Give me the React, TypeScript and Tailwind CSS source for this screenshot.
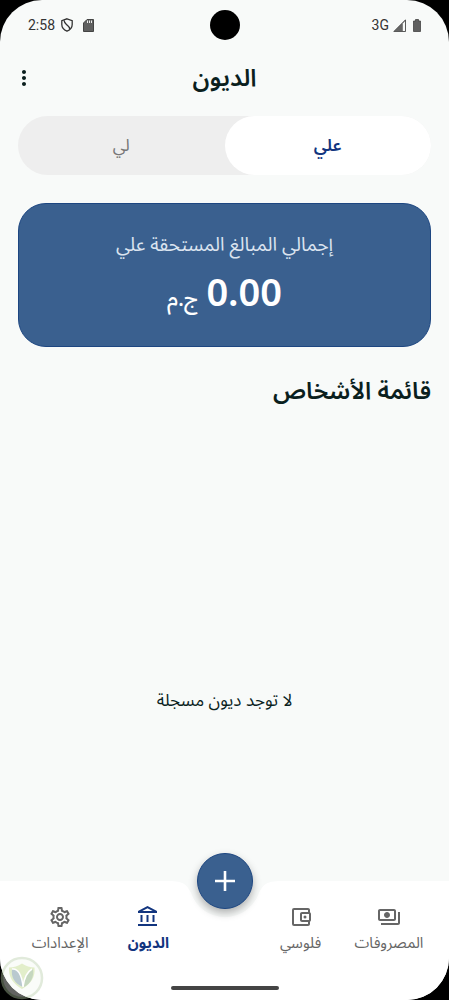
import { useState, type ReactNode } from "react";
import clsx from "clsx";
import {
  MdMoreVert,
  MdOutlineAccountBalance,
  MdOutlineAccountBalanceWallet,
  MdOutlinePayments,
  MdOutlineSettings,
} from "react-icons/md";

type Tab = "owed" | "lent";

function StatusBar() {
  return (
    <div dir="ltr" className="relative flex h-[50px] items-center justify-between pr-7 pl-7 text-[#333]">
      <div className="flex items-center gap-1.5 font-[Roboto,sans-serif] text-sm">
        <span>2:58</span>
        <svg viewBox="0 0 12 14" className="h-3.5 w-3" fill="none" stroke="currentColor" strokeWidth="1.3">
          <path d="M6 .8 11.2 2.6V6.6C11.2 9.6 9 12 6 13.2 3 12 .8 9.6 .8 6.6V2.6Z" />
          <path d="M3 2.4C3.4 5 4.6 5.8 6 7s2.4 2 2.8 4" />
        </svg>
        <svg viewBox="0 0 11 13" className="ml-1 h-[13px] w-[11px]">
          <path d="M.5 4 4 .5h6.5v12H.5Z" fill="#606060" stroke="#444" />
          <path d="M4.5 1.5v2.5M6.5 1.5v2.5M8.5 1.5v2.5" stroke="#eee" />
        </svg>
      </div>
      <div className="absolute top-[10px] left-1/2 size-[30px] -translate-x-1/2 rounded-full bg-black" />
      <div className="flex items-center font-[Roboto,sans-serif] text-sm">
        <span>3G</span>
        <svg viewBox="0 0 13 13" className="ml-1 size-[13px]">
          <path d="M.8 12.5 12.5 .8v11.7Z" fill="#666" stroke="#444" strokeWidth=".8" />
          <path d="M9.8 4.4 12 2.2V12H9.8Z" fill="#f8faf9" />
        </svg>
        <svg viewBox="0 0 8 13" className="ml-[7px] h-[13px] w-2">
          <path d="M.5 2H2.5V.5h3V2h2v10.5h-7Z" fill="#606060" stroke="#444" strokeWidth=".8" />
        </svg>
      </div>
    </div>
  );
}

function TabButton({ active, onClick, children }: { active: boolean; onClick: () => void; children: ReactNode }) {
  return (
    <button
      type="button"
      role="tab"
      aria-selected={active}
      onClick={onClick}
      className={clsx(
        "flex-1 rounded-full pt-0.5 text-[17px]",
        active ? "bg-white font-semibold text-[#12357f]" : "text-[#777]"
      )}
    >
      {children}
    </button>
  );
}

function NavItem({ icon, label, active = false }: { icon: ReactNode; label: string; active?: boolean }) {
  return (
    <a
      href="#"
      aria-current={active ? "page" : undefined}
      className={clsx(
        "flex flex-1 flex-col items-center gap-0.5 text-[15px] leading-6 whitespace-nowrap",
        active ? "font-bold text-[#12357f]" : "text-[#666]"
      )}
    >
      {icon}
      <span>{label}</span>
    </a>
  );
}

function Watermark() {
  return (
    <svg viewBox="0 0 44 44" className="absolute bottom-0 left-0 size-11 opacity-40">
      <circle cx="22" cy="22" r="20" fill="#f4f8f2" stroke="#b5cda6" strokeWidth="2.5" />
      <path d="M9 11.500q7 0 13-4 6 4 12.500 4Q36 25 22 33 8 25 9 11.500Z" fill="#b9d67c" />
      <path d="M12 13c6-1 11 6 11 18-9-4-12-10-11-18Z" fill="#52798a" />
      <path d="M24 31c0-9 3-15 9-18 1 8-2 14-9 18Z" fill="#6f9c62" />
      <path d="M12 13c6-1 10 6 11 18 1-9 4-15 9-18" fill="none" stroke="#fff" strokeWidth="1.5" />
    </svg>
  );
}

export default function App() {
  const [tab, setTab] = useState<Tab>("owed");

  return (
    <div dir="rtl" lang="ar" className="relative flex min-h-screen flex-col bg-black font-['Noto_Sans_Arabic','DejaVu_Sans',sans-serif]">
      <div className="flex flex-1 flex-col overflow-hidden rounded-[42px] bg-[#f8faf9] text-[#0b1f1e]">
        <StatusBar />

        <header className="relative flex h-14 items-center justify-center">
          <h1 className="pt-0.5 text-2xl font-semibold">الديون</h1>
          <button type="button" aria-label="المزيد" className="absolute left-3 p-0">
            <MdMoreVert className="size-6" />
          </button>
        </header>

        <main className="flex flex-1 flex-col px-[18px] pt-[10px]">
          <div role="tablist" className="flex h-[59px] rounded-full bg-[#eeeeee]">
            <TabButton active={tab === "owed"} onClick={() => setTab("owed")}>
              علي
            </TabButton>
            <TabButton active={tab === "lent"} onClick={() => setTab("lent")}>
              لي
            </TabButton>
          </div>

          <section className="mt-7 flex h-36 flex-col items-center rounded-[28px] border border-[#1d4681] bg-[#3a608f] pt-6 text-white">
            <p className="text-[19px] leading-[34px] text-[#dbe4ef]">إجمالي المبالغ المستحقة علي</p>
            <p className="flex items-baseline gap-2 leading-[58px]">
              <span className="font-['Noto_Sans',sans-serif] text-[38px] font-semibold">0.00</span>
              <span className="text-[22px] font-medium">ج.م</span>
            </p>
          </section>

          <h2 className="mt-6 text-2xl leading-[42px] font-semibold">قائمة الأشخاص</h2>

          <div className="flex flex-1 items-center justify-center pt-[110px]">
            <p className="text-[17px]">لا توجد ديون مسجلة</p>
          </div>
        </main>

        <nav className="relative flex h-[119px] bg-white px-4 pt-6">
          <NavItem icon={<MdOutlinePayments className="size-6" />} label="المصروفات" />
          <NavItem icon={<MdOutlineAccountBalanceWallet className="size-6" />} label="فلوسي" />
          <div className="w-16" />
          <NavItem icon={<MdOutlineAccountBalance className="size-6" />} label="الديون" active />
          <NavItem icon={<MdOutlineSettings className="size-6" />} label="الإعدادات" />

          <svg viewBox="0 0 112 37" className="absolute top-0 left-1/2 h-[37px] w-28 -translate-x-1/2">
            <path d="M0 0C15 0 18 4 22 12A36 36 0 0 0 90 12C94 4 97 0 112 0Z" fill="#f8faf9" />
          </svg>
          <button
            type="button"
            aria-label="إضافة"
            className="absolute -top-7 left-1/2 flex size-14 -translate-x-1/2 items-center justify-center rounded-full border border-[#1d4681] bg-[#3a608f] shadow-[0_4px_8px_rgba(0,0,0,0.3)]"
          >
            <svg viewBox="0 0 22 22" className="size-[22px]" stroke="white" strokeWidth="2.6">
              <path d="M11 1v20M1 11h20" />
            </svg>
          </button>
          <div className="absolute bottom-[10px] left-1/2 h-1 w-[108px] -translate-x-1/2 rounded-full bg-[#444]" />
        </nav>
      </div>
      <Watermark />
    </div>
  );
}
